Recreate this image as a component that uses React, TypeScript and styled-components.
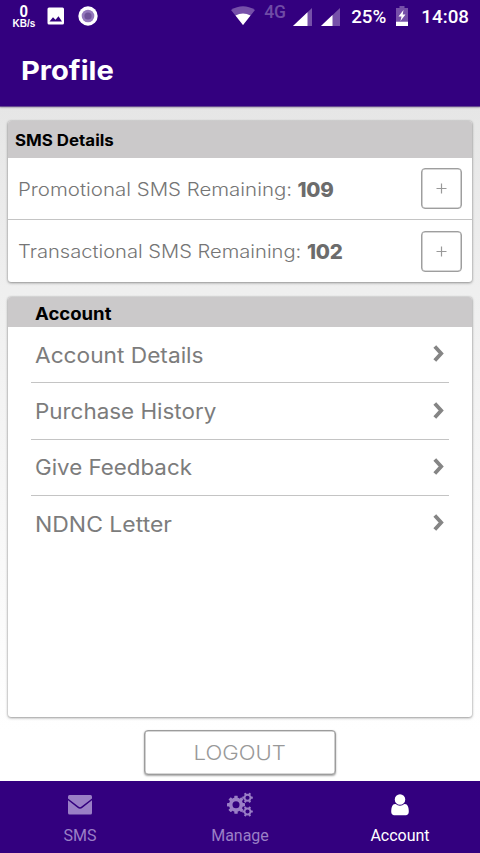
import React from 'react';
import styled, { createGlobalStyle } from 'styled-components';

const purple = '#33007f';

const GlobalStyle = createGlobalStyle`
  *, *::before, *::after { box-sizing: border-box; }
  body { margin: 0; font-family: Inter, "Open Sans", sans-serif; }
  button { font-family: inherit; padding: 0; }
`;

const Screen = styled.div`
  width: 480px;
  height: 853px;
  display: flex;
  flex-direction: column;
  overflow: hidden;
  background: linear-gradient(#e6e6e6 107px, #efefef 290px, #fff 730px);
`;

const Top = styled.header`
  flex: none;
  height: 106px;
  background: ${purple};
  color: #fff;
  box-shadow: 0 1px 1px rgba(60, 20, 120, 0.7), 0 2px 2px rgba(0, 0, 0, 0.15);
`;

const StatusBar = styled.div`
  height: 34px;
  display: flex;
  justify-content: space-between;
  padding: 0 11px 0 12px;
  font-family: Roboto, sans-serif;
`;

const StatusGroup = styled.div`
  display: flex;
  align-items: flex-start;
`;

const Speed = styled.div`
  width: 24px;
  margin-right: 11px;
  display: flex;
  flex-direction: column;
  align-items: center;
  font: 700 10px/10px "Liberation Sans", sans-serif;
  padding-top: 4px;
`;

const SpeedValue = styled.span`
  font-size: 17px;
  line-height: 15px;
  transform: scaleX(0.9);
`;

const Glyph = styled.svg<{ $top: number; $left?: number }>`
  display: block;
  flex: none;
  margin-top: ${p => p.$top}px;
  margin-left: ${p => p.$left ?? 0}px;
`;

const StatusText = styled.span<{ $left: number }>`
  margin-left: ${p => p.$left}px;
  font-size: 18.8px;
  font-weight: 500;
  line-height: 34px;
`;

const Network = styled.span`
  margin-left: 9px;
  width: 23px;
  font-size: 17.5px;
  font-weight: 500;
  line-height: 24px;
  color: #6f4ba6;
`;

/* Letterforms widened from their left edge */
const Wide = styled.span<{ $stretch: number; $origin?: string }>`
  display: inline-block;
  white-space: nowrap;
  transform: scaleX(${p => p.$stretch});
  transform-origin: ${p => p.$origin ?? 'left'} center;
`;

const Title = styled.h1`
  margin: 0;
  padding: 20px 0 0 21px;
  font-size: 26px;
  line-height: 34px;
  font-weight: 700;
`;

const Content = styled.main`
  flex: 1;
  display: flex;
  flex-direction: column;
  align-items: center;
  padding-top: 15px;
`;

const Card = styled.section<{ $height: number }>`
  flex: none;
  width: 464px;
  height: ${p => p.$height}px;
  margin-bottom: 15px;
  background: #fff;
  border-radius: 3px;
  overflow: hidden;
  box-shadow: 0 0 2px rgba(0, 0, 0, 0.25), 0 1px 3px rgba(0, 0, 0, 0.35);
`;

const CardHeader = styled.h2<{ $height: number; $indent: number; $size: number; $drop?: number }>`
  margin: 0;
  height: ${p => p.$height}px;
  padding: ${p => p.$drop ?? 0}px 0 0 ${p => p.$indent}px;
  display: flex;
  align-items: center;
  background: #cbc9ca;
  color: #000;
  font-size: ${p => p.$size}px;
  font-weight: 700;
`;

const BalanceRow = styled.div`
  height: 61px;
  display: flex;
  align-items: center;
  padding: 0 10px 0 10px;
  color: #757575;
  & + & {
    height: 63px;
    border-top: 1px solid #c4c4c4;
  }
`;

const BalanceLabel = styled.div<{ $width: number }>`
  width: ${p => p.$width}px;
  padding-top: 1px;
  font-size: 18px;
  font-weight: 360;
`;

const BalanceCount = styled.strong`
  flex: 1;
  font-size: 20.5px;
  font-weight: 800;
  letter-spacing: -0.2px;
  line-height: 24px;
  padding-top: 2px;
  color: #6c6c6c;
`;

const AddButton = styled.button`
  width: 41px;
  height: 41px;
  display: grid;
  place-items: center;
  background: #fff;
  border: 1px solid #9e9e9e;
  border-radius: 4px;
  box-shadow: inset 0 0 0 0.6px #b0b0b0;
`;

const Menu = styled.nav`
  padding: 0 23px;
`;

const MenuItem = styled.a`
  height: 56.4px;
  display: flex;
  align-items: center;
  justify-content: space-between;
  padding: 0 5px 0 3.5px;
  color: #7c7c7c;
  font-size: 21px;
  font-weight: 370;
  &:first-child { height: 55.4px; }
  & + & { border-top: 1px solid #c4c4c4; }
`;

const MenuLabel = styled.span`
  padding-top: 1px;
`;

const Logout = styled.button`
  flex: none;
  width: 192px;
  height: 45px;
  margin-top: -2px;
  background: #fff;
  border: 1.5px solid #9c9c9c;
  border-radius: 4px;
  box-shadow: 0 1px 2px rgba(0, 0, 0, 0.35), inset 0 0 0 0.6px #b0b0b0;
  color: #999;
  font-size: 20.5px;
  font-weight: 300;
`;

const TabBar = styled.nav`
  flex: none;
  height: 72px;
  display: grid;
  grid-template-columns: repeat(3, 1fr);
  background: ${purple};
  font-family: Roboto, sans-serif;
  font-size: 16px;
`;

const Tab = styled.a<{ $active?: boolean }>`
  display: flex;
  flex-direction: column;
  align-items: center;
  padding-top: 10px;
  color: ${p => (p.$active ? '#fff' : '#9a7fc6')};
`;

const TabIcon = styled.span`
  height: 27px;
  display: grid;
  place-items: center;
`;

const TabLabel = styled.span`
  margin-top: 8px;
  line-height: 20px;
`;

const Signal = ({ left, split }: { left: number; split: number }) => (
  <Glyph $top={8} $left={left} width="19" height="18" viewBox="0 0 19 18">
    <path d="M19 0v18H0z" fill="#7650a9" />
    <path d={`M0 18L${split} ${18 - (split * 18) / 19}V18z`} fill="#fff" />
  </Glyph>
);

const Plus = () => (
  <svg width="11" height="11" viewBox="0 0 11 11">
    <path d="M5.500 .5v10M.5 5.500h10" stroke="#999" strokeWidth="1.2" />
  </svg>
);

const Chevron = () => (
  <svg width="11" height="19" viewBox="0 0 11 19">
    <path d="M1.800 1.400L8.200 8.500l-6.400 7.100" fill="none" stroke="#858585" strokeWidth="3.800" />
  </svg>
);

const Gear = ({ x, y, ring, thick, tooth, teeth, reach }: {
  x: number; y: number; ring: number; thick: number; tooth: number; teeth: number; reach: number;
}) => (
  <g transform={`translate(${x} ${y})`}>
    <circle r={ring} fill="none" stroke="currentColor" strokeWidth={thick} />
    {Array.from({ length: teeth }, (_, i) => (
      <rect
        key={i}
        x={-tooth / 2}
        y={-reach}
        width={tooth}
        height={reach - ring}
        rx="0.4"
        fill="currentColor"
        transform={`rotate(${(360 / teeth) * i + (teeth === 6 ? 30 : 0)})`}
      />
    ))}
  </g>
);

const balances = [
  { label: 'Promotional SMS Remaining:', width: 279.5, stretch: 1.136, count: 109 },
  { label: 'Transactional SMS Remaining:', width: 289, stretch: 1.118, count: 102 },
];

const links = [
  { label: 'Account Details', stretch: 1.08 },
  { label: 'Purchase History', stretch: 1.067 },
  { label: 'Give Feedback', stretch: 1.063 },
  { label: 'NDNC Letter', stretch: 1.093 },
];

export default function App() {
  return (
    <Screen>
      <GlobalStyle />
      <Top>
        <StatusBar>
          <StatusGroup>
            <Speed>
              <SpeedValue>0</SpeedValue>
              <span>KB/s</span>
            </Speed>
            <Glyph $top={7} width="18" height="18" viewBox="0 0 18 18">
              <path fillRule="evenodd" fill="#fff" d="M2 .5h13.500a1.500 1.500 0 0 1 1.500 1.500v14a1.500 1.500 0 0 1-1.500 1.500H2A1.500 1.500 0 0 1 .5 16V2A1.500 1.500 0 0 1 2 .5zM2.500 14.500h12.500L11.500 9.200l-3 3.600-2.500-2.600z" />
            </Glyph>
            <Glyph $top={6} $left={13} width="20" height="20" viewBox="0 0 20 20">
              <circle cx="10" cy="10" r="9.700" fill="#fff" />
              <circle cx="10" cy="10" r="6.300" fill="#9478bc" />
              <circle cx="10" cy="10" r="3.600" fill="#6f5299" />
            </Glyph>
          </StatusGroup>
          <StatusGroup>
            <Glyph $top={6} width="24" height="20" viewBox="0 0 24 20">
              <path d="M0 4Q12-3.500 24 4L12 19z" fill="#7650a9" />
              <path d="M4.500 9.600Q12 5.200 19.500 9.600L12 19z" fill="#fff" />
            </Glyph>
            <Network>4G</Network>
            <Signal left={6} split={14.5} />
            <Signal left={9} split={11.5} />
            <StatusText $left={11}>25%</StatusText>
            <Glyph $top={6} $left={10} width="12" height="20" viewBox="0 0 12 20">
              <path d="M0 2h3.500V0h5v2H12v13H0z" fill="#7650a9" />
              <path d="M0 15.500h12V20H0zM7.500 4L2.500 10.500h3L4.500 15l5-6.500H6.700z" fill="#fff" />
            </Glyph>
            <StatusText $left={13}>14:08</StatusText>
          </StatusGroup>
        </StatusBar>
        <Title><Wide $stretch={1.12}>Profile</Wide></Title>
      </Top>
      <Content>
        <Card $height={161}>
          <CardHeader $height={37} $indent={6.5} $size={16}>
            <Wide $stretch={1.055}>SMS Details</Wide>
          </CardHeader>
          {balances.map(b => (
            <BalanceRow key={b.label}>
              <BalanceLabel $width={b.width}>
                <Wide $stretch={b.stretch}>{b.label}</Wide>
              </BalanceLabel>
              <BalanceCount>{b.count}</BalanceCount>
              <AddButton aria-label="Add"><Plus /></AddButton>
            </BalanceRow>
          ))}
        </Card>
        <Card $height={420}>
          <CardHeader $height={30} $indent={26.5} $size={17} $drop={3}>
            <Wide $stretch={1.09}>Account</Wide>
          </CardHeader>
          <Menu>
            {links.map(l => (
              <MenuItem key={l.label}>
                <MenuLabel><Wide $stretch={l.stretch}>{l.label}</Wide></MenuLabel>
                <Chevron />
              </MenuItem>
            ))}
          </Menu>
        </Card>
        <Logout><Wide $stretch={1.08} $origin="center">LOGOUT</Wide></Logout>
      </Content>
      <TabBar>
        <Tab>
          <TabIcon>
            <svg width="24" height="20" viewBox="0 0 24 20">
              <rect width="24" height="19.500" rx="1.500" fill="currentColor" />
              <path d="M-.5 4L10 12.200Q12 13.800 14 12.200L24.500 4" fill="none" stroke={purple} strokeWidth="1.500" />
            </svg>
          </TabIcon>
          <TabLabel>SMS</TabLabel>
        </Tab>
        <Tab>
          <TabIcon>
            <svg width="26" height="25" viewBox="0 0 26 25">
              <Gear x={9} y={12.7} ring={5.3} thick={3.6} tooth={3.4} teeth={8} reach={9} />
              <Gear x={20.5} y={5.7} ring={3} thick={1.9} tooth={2.2} teeth={6} reach={5.3} />
              <Gear x={20.5} y={19.5} ring={3} thick={1.9} tooth={2.2} teeth={6} reach={5.3} />
            </svg>
          </TabIcon>
          <TabLabel>Manage</TabLabel>
        </Tab>
        <Tab $active>
          <TabIcon>
            <svg width="18" height="22" viewBox="240 112 1312 1604" fill="currentColor">
              <path d="M1536 1399q0 109-62.500 187t-150.500 78h-854q-88 0-150.500-78t-62.500-187q0-85 8.500-160.500t31.500-152 58.500-131 94-89 134.500-34.500q131 128 313 128t313-128q76 0 134.500 34.500t94 89 58.500 131 31.500 152 8.500 160.500zm-256-887q0 159-112.500 271.500t-271.500 112.500-271.500-112.500-112.500-271.500 112.500-271.500 271.500-112.500 271.500 112.500 112.500 271.500z" />
            </svg>
          </TabIcon>
          <TabLabel>Account</TabLabel>
        </Tab>
      </TabBar>
    </Screen>
  );
}
